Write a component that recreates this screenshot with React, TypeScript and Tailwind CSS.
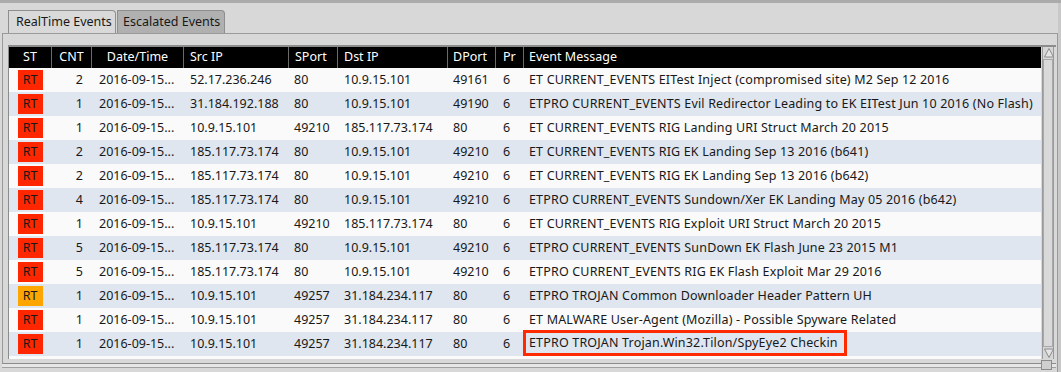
import React from 'react'

type Row = {
  level: 'red' | 'orange'
  cnt: number
  src: string
  sport: string
  dst: string
  dport: string
  msg: string
  boxed?: boolean
}

const rows: Row[] = [
  { level: 'red', cnt: 2, src: '52.17.236.246', sport: '80', dst: '10.9.15.101', dport: '49161', msg: 'ET CURRENT_EVENTS EITest Inject (compromised site) M2 Sep 12 2016' },
  { level: 'red', cnt: 1, src: '31.184.192.188', sport: '80', dst: '10.9.15.101', dport: '49190', msg: 'ETPRO CURRENT_EVENTS Evil Redirector Leading to EK EITest Jun 10 2016 (No Flash)' },
  { level: 'red', cnt: 1, src: '10.9.15.101', sport: '49210', dst: '185.117.73.174', dport: '80', msg: 'ET CURRENT_EVENTS RIG Landing URI Struct March 20 2015' },
  { level: 'red', cnt: 2, src: '185.117.73.174', sport: '80', dst: '10.9.15.101', dport: '49210', msg: 'ET CURRENT_EVENTS RIG EK Landing Sep 13 2016 (b641)' },
  { level: 'red', cnt: 2, src: '185.117.73.174', sport: '80', dst: '10.9.15.101', dport: '49210', msg: 'ET CURRENT_EVENTS RIG EK Landing Sep 13 2016 (b642)' },
  { level: 'red', cnt: 4, src: '185.117.73.174', sport: '80', dst: '10.9.15.101', dport: '49210', msg: 'ETPRO CURRENT_EVENTS Sundown/Xer EK Landing May 05 2016 (b642)' },
  { level: 'red', cnt: 1, src: '10.9.15.101', sport: '49210', dst: '185.117.73.174', dport: '80', msg: 'ET CURRENT_EVENTS RIG Exploit URI Struct March 20 2015' },
  { level: 'red', cnt: 5, src: '185.117.73.174', sport: '80', dst: '10.9.15.101', dport: '49210', msg: 'ETPRO CURRENT_EVENTS SunDown EK Flash June 23 2015 M1' },
  { level: 'red', cnt: 5, src: '185.117.73.174', sport: '80', dst: '10.9.15.101', dport: '49210', msg: 'ETPRO CURRENT_EVENTS RIG EK Flash Exploit Mar 29 2016' },
  { level: 'orange', cnt: 1, src: '10.9.15.101', sport: '49257', dst: '31.184.234.117', dport: '80', msg: 'ETPRO TROJAN Common Downloader Header Pattern UH' },
  { level: 'red', cnt: 1, src: '10.9.15.101', sport: '49257', dst: '31.184.234.117', dport: '80', msg: 'ET MALWARE User-Agent (Mozilla) - Possible Spyware Related' },
  { level: 'red', cnt: 1, src: '10.9.15.101', sport: '49257', dst: '31.184.234.117', dport: '80', msg: 'ETPRO TROJAN Trojan.Win32.Tilon/SpyEye2 Checkin', boxed: true },
]

const Arrow = ({ down }: { down?: boolean }) => (
  <svg width="12" height="12" viewBox="0 0 12 12" className="block">
    <polygon
      points={down ? '1.5,2 10.5,2 6,10.5' : '6,1.5 10.5,10 1.5,10'}
      fill="#e4e4e4"
      stroke="#8c8c8c"
      strokeWidth="1"
    />
  </svg>
)

const App = () => {
  return (
    <div className="w-[1061px] h-[372px] overflow-hidden bg-[#c8c8c8] border-t-[3px] border-[#ababab] font-['Noto_Sans',sans-serif] text-[12.5px] text-[#181818]">
      <div className="w-[1058px] h-[369px] bg-[#d8d8d8] flex flex-col">
        {/* tabs */}
        <div className="flex pl-[8px] pt-[7px] h-[30px] items-end">
          <div className="h-[23px] w-[108px] flex items-center pl-[7px] bg-[#d9d9d9] border border-b-0 border-[#8e8e8e] rounded-tr-[4px] relative z-10">
            RealTime Events
          </div>
          <div className="h-[23px] w-[108px] flex items-center pl-[5px] bg-[#b0b0b0] border border-b-0 border-[#8e8e8e] rounded-tr-[4px] ml-px">
            Escalated Events
          </div>
        </div>

        {/* pane */}
        <div className="ml-[2px] flex-1 border-t border-l border-r border-[#9a9a9a] bg-[#d8d8d8] pt-[11px] pl-[5px] pr-[1px] flex flex-col">
          <div className="flex border-t-2 border-l border-[#8c8c8c] h-[314px]">
            <div className="w-[1032px] flex flex-col bg-white">
              {/* header */}
              <div className="flex h-[21px] bg-black text-white shrink-0">
                <div className="w-[42px] flex items-center justify-center">ST</div>
                <div className="w-[40px] flex items-center justify-center border-l border-[#6a6a6a]">CNT</div>
                <div className="w-[92px] flex items-center justify-center border-l border-[#6a6a6a]">Date/Time</div>
                <div className="w-[105px] flex items-center pl-[6px] border-l border-[#6a6a6a]">Src IP</div>
                <div className="w-[49px] flex items-center pl-[6px] border-l border-[#6a6a6a]">SPort</div>
                <div className="w-[110px] flex items-center pl-[6px] border-l border-[#6a6a6a]">Dst IP</div>
                <div className="w-[48px] flex items-center pl-[5px] border-l border-[#6a6a6a]">DPort</div>
                <div className="w-[28px] flex items-center pl-[7px] border-l border-[#6a6a6a]">Pr</div>
                <div className="flex-1 flex items-center pl-[5px] border-l border-[#6a6a6a] mr-[2px]">Event Message</div>
              </div>

              {/* rows */}
              <div className="flex-1 flex flex-col bg-[#fafafa]">
                {rows.map((r, i) => (
                  <div
                    key={i}
                    className={`flex h-[24px] shrink-0 items-center ${i % 2 === 1 ? 'bg-[#dfe6ef]' : 'bg-[#fafafa]'}`}
                  >
                    <div className="w-[42px] flex justify-center">
                      <span
                        className={`w-[25px] h-[20px] flex items-center justify-center ${r.level === 'red' ? 'bg-[#ff2600]' : 'bg-[#ffa500]'}`}
                      >
                        RT
                      </span>
                    </div>
                    <div className="w-[40px] text-right pr-[8px]">{r.cnt}</div>
                    <div className="w-[92px] pl-[8px]">2016-09-15...</div>
                    <div className="w-[105px] pl-[7px]">{r.src}</div>
                    <div className="w-[49px] pl-[6px]">{r.sport}</div>
                    <div className="w-[110px] pl-[7px]">{r.dst}</div>
                    <div className="w-[48px] pl-[6px]">{r.dport}</div>
                    <div className="w-[28px] pl-[8px]">6</div>
                    <div className="flex-1 h-full flex items-center tracking-[0.17px] whitespace-nowrap">
                      {r.boxed ? (
                        <span className="h-[26px] -mt-[2px] flex items-center pl-[3px] pr-[6px] border-[3px] border-[#ff2a00]">
                          {r.msg}
                        </span>
                      ) : (
                        <span className="pl-[6px]">{r.msg}</span>
                      )}
                    </div>
                  </div>
                ))}
              </div>
            </div>

            {/* vertical scrollbar */}
            <div className="w-[12px] ml-px flex flex-col bg-[#d6d6d6] border-l border-r border-[#9a9a9a]">
              <Arrow />
              <div className="flex-1 border border-[#a8a8a8] bg-[#d9d9d9]" />
              <Arrow down />
            </div>
          </div>

          {/* bottom strip */}
          <div className="relative mt-[4px] -ml-[6px] border-t border-[#8c8c8c] h-[4px] bg-[#e6e6e6]" />
          <div className="-ml-[6px] border-t border-[#a0a0a0] flex-1 bg-[#d8d8d8] relative">
            <div className="absolute left-[1039px] -top-[8px] w-[11px] h-[10px] bg-[#cfcfcf] border border-[#8c8c8c]" />
          </div>
        </div>
      </div>
    </div>
  )
}

export default App
